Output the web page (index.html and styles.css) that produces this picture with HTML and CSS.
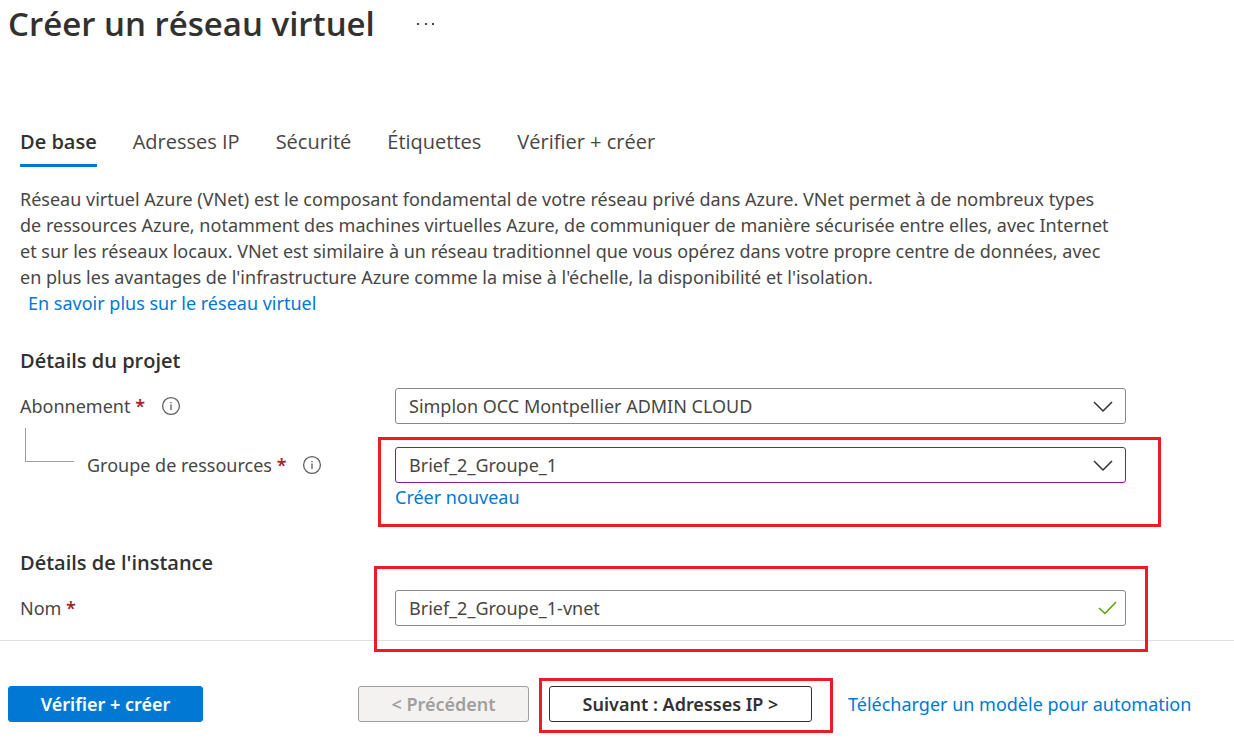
FILE: index.html
```html
<!DOCTYPE html>
<html lang="fr">
<head>
<meta charset="utf-8">
<meta name="viewport" content="width=device-width, initial-scale=1">
<title>Créer un réseau virtuel</title>
<link rel="stylesheet" href="styles.css">
</head>
<body>
<header class="page-header">
  <h1 class="title">Créer un réseau virtuel</h1>
  <button class="more" type="button" aria-label="Plus d'actions">
    <svg width="18" height="4" viewBox="0 0 18 4" fill="#484644"><rect x="0" y="1" width="2" height="2"/><rect x="8" y="1" width="2" height="2"/><rect x="15" y="1" width="2" height="2"/></svg>
  </button>
</header>
<main class="content">
  <nav class="tabs">
    <a class="tab tab-active" href="#base" aria-current="page">De base</a>
    <a class="tab" href="#ip">Adresses IP</a>
    <a class="tab" href="#securite">Sécurité</a>
    <a class="tab" href="#etiquettes">Étiquettes</a>
    <a class="tab" href="#verifier">Vérifier + créer</a>
  </nav>
  <p class="intro">Réseau virtuel Azure (VNet) est le composant fondamental de votre réseau privé dans Azure. VNet permet à de nombreux types<br>de ressources Azure, notamment des machines virtuelles Azure, de communiquer de manière sécurisée entre elles, avec Internet<br>et sur les réseaux locaux. VNet est similaire à un réseau traditionnel que vous opérez dans votre propre centre de données, avec<br>en plus les avantages de l'infrastructure Azure comme la mise à l'échelle, la disponibilité et l'isolation.</p>
  <a class="link learn-more" href="#doc">En savoir plus sur le réseau virtuel</a>

  <form id="vnet-form">
    <section class="section">
      <h2 class="section-title">Détails du projet</h2>
      <div class="row">
        <div class="label-cell">
          <label for="subscription">Abonnement <span class="required">*</span></label>
          <svg class="info" viewBox="0 0 20 20" role="img" aria-label="Informations"><circle cx="10" cy="10" r="8.4"/><path d="M10 8.5V14M10 6V7.3"/></svg>
        </div>
        <div class="control">
          <select class="field" id="subscription"><option>Simplon OCC Montpellier ADMIN CLOUD</option></select>
          <svg class="chevron" viewBox="0 0 20 12"><path d="M1 1L10 10L19 1"/></svg>
        </div>
      </div>
      <div class="row">
        <div class="label-cell label-child">
          <span class="branch"></span>
          <label for="group">Groupe de ressources <span class="required">*</span></label>
          <svg class="info" viewBox="0 0 20 20" role="img" aria-label="Informations"><circle cx="10" cy="10" r="8.4"/><path d="M10 8.5V14M10 6V7.3"/></svg>
        </div>
        <div class="marked marked-group">
          <div class="control">
            <select class="field field-edited" id="group"><option>Brief_2_Groupe_1</option></select>
            <svg class="chevron" viewBox="0 0 20 12"><path d="M1 1L10 10L19 1"/></svg>
          </div>
          <a class="link create-new" href="#nouveau">Créer nouveau</a>
        </div>
      </div>
    </section>
    <section class="section section-instance">
      <h2 class="section-title">Détails de l'instance</h2>
      <div class="row">
        <div class="label-cell">
          <label for="name">Nom <span class="required">*</span></label>
        </div>
        <div class="control marked marked-name">
          <input class="field" id="name" type="text" value="Brief_2_Groupe_1-vnet">
          <svg class="check" viewBox="0 0 20 14"><path d="M1 7L7 12.5L18 1"/></svg>
        </div>
      </div>
    </section>
  </form>
</main>
<footer class="footer">
  <button class="button button-primary" type="submit" form="vnet-form">Vérifier + créer</button>
  <button class="button button-previous" type="button" disabled>&lt; Précédent</button>
  <div class="marked marked-next">
    <button class="button button-next" type="button">Suivant : Adresses IP &gt;</button>
  </div>
  <a class="link template-link" href="#modele">Télécharger un modèle pour automation</a>
</footer>
</body>
</html>
```
FILE: styles.css
```css
* { box-sizing: border-box; }

body {
  margin: 0;
  background: #fff;
  color: #484644;
  font-family: "Segoe UI", "Noto Sans", "Open Sans", sans-serif;
  font-size: 18px;
  line-height: 26px;
}

.page-header {
  display: flex;
  align-items: center;
  gap: 34px;
  height: 48px;
  padding-left: 8px;
}

.title {
  margin: 0;
  color: #323130;
  font-family: "Segoe UI", "Open Sans", sans-serif;
  font-size: 33px;
  line-height: 48px;
  font-weight: 600;
}

.more {
  display: flex;
  padding: 8px;
  border: 0;
  background: none;
}

.content { padding: 81px 108px 0 20px; }

.tabs {
  display: flex;
  flex-wrap: wrap;
  gap: 36px;
  font-family: "Segoe UI", "Open Sans", sans-serif;
}

.tab {
  padding-bottom: 9px;
  border-bottom: 3px solid transparent;
  color: #484644;
  font-size: 20px;
  text-decoration: none;
}

.tab-active {
  border-color: #0078d4;
  color: #323130;
  font-weight: 600;
}

.intro {
  margin: 19px 0 0;
  white-space: nowrap;
}

.link {
  color: #0078d4;
  text-decoration: none;
}

.learn-more { margin-left: 8px; }

.section { margin-top: 32px; }

.section-title {
  margin: 0 0 14px;
  color: #323130;
  font-family: "Segoe UI", "Open Sans", sans-serif;
  font-size: 20px;
  line-height: 26px;
  font-weight: 600;
}

.row {
  display: grid;
  grid-template-columns: 375px 1fr;
}

.row + .row { margin-top: 23px; }

.label-cell {
  display: flex;
  align-items: center;
  gap: 16px;
  height: 36px;
}

.required {
  color: #a4262c;
  font-weight: 600;
}

.info {
  width: 20px;
  height: 20px;
  fill: none;
  stroke: #605e5c;
  stroke-width: 1.3;
}

.label-child { padding-left: 5px; }

.branch {
  align-self: flex-start;
  width: 49px;
  height: 34px;
  margin: -19px -3px 0 0;
  border-left: 1px solid #a19f9d;
  border-bottom: 1px solid #a19f9d;
}

.control { position: relative; }

.field {
  display: block;
  width: 100%;
  height: 36px;
  padding: 0 48px 0 13px;
  border: 1px solid #8a8886;
  border-radius: 3px;
  background: #fff;
  color: inherit;
  font: inherit;
  appearance: none;
}

.field-edited { border-color: #881798; }

.chevron, .check {
  position: absolute;
  pointer-events: none;
  fill: none;
}

.chevron {
  top: 13px;
  right: 13px;
  width: 20px;
  height: 12px;
  stroke: #323130;
  stroke-width: 1.5;
}

.check {
  top: 11px;
  right: 8px;
  width: 20px;
  height: 14px;
  stroke: #57a300;
  stroke-width: 1.6;
}

.create-new {
  display: inline-block;
  margin-top: 1px;
}

/* Red call-out frames */
.marked { position: relative; }

.marked::after {
  content: "";
  position: absolute;
  border: 3px solid #ed1c24;
  pointer-events: none;
}

.marked-group::after { inset: -10px -35px -17px -17px; }
.marked-name::after { inset: -24px -22px -26px -21px; }
.marked-next::after { inset: -8px -21px -11px -10px; }

.section-instance { margin-top: 40px; }

.footer {
  display: flex;
  align-items: center;
  margin-top: 14px;
  padding: 45px 8px 22px;
  border-top: 1px solid #e1dfdd;
}

.button {
  height: 36px;
  padding: 0;
  border: 1px solid #323130;
  border-radius: 3px;
  background: #fff;
  color: #323130;
  font: inherit;
  font-weight: 600;
}

.button-primary {
  width: 195px;
  border-color: #0078d4;
  background: #0078d4;
  color: #fff;
}

.button-previous {
  width: 171px;
  margin: 0 20px 0 155px;
  border-color: #a19f9d;
  background: #f3f2f1;
  color: #a19f9d;
}

.button-next { width: 263px; }

.template-link { margin-left: 36px; }
```
